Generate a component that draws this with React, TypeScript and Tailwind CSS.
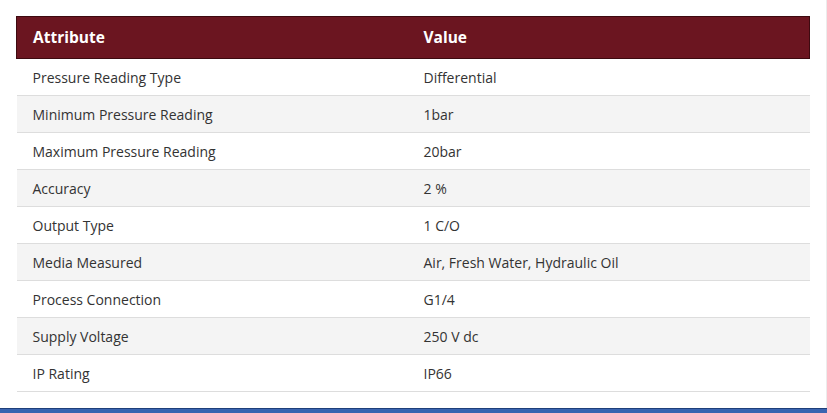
const rows: [string, string][] = [
  ["Pressure Reading Type", "Differential"],
  ["Minimum Pressure Reading", "1bar"],
  ["Maximum Pressure Reading", "20bar"],
  ["Accuracy", "2 %"],
  ["Output Type", "1 C/O"],
  ["Media Measured", "Air, Fresh Water, Hydraulic Oil"],
  ["Process Connection", "G1/4"],
  ["Supply Voltage", "250 V dc"],
  ["IP Rating", "IP66"],
];

export default function App() {
  return (
    <div
      className="flex h-[413px] w-[827px] flex-col overflow-hidden bg-white"
      style={{ fontFamily: '"Open Sans", "Noto Sans", sans-serif' }}
    >
      <div className="flex-1 border-r border-[#ececec] pl-4 pt-4">
        <table className="w-[794px] border-collapse text-left">
          <thead>
            <tr className="h-[42px] bg-[#6b1520]">
              <th className="w-[391px] border-y border-l border-[#3d0a10] pl-4 text-[15.5px] font-bold text-white">
                Attribute
              </th>
              <th className="border-y border-r border-[#3d0a10] pl-4 text-[15.5px] font-bold text-white">
                Value
              </th>
            </tr>
          </thead>
          <tbody>
            {rows.map(([attr, value], i) => (
              <tr
                key={attr}
                className={`h-[37px] border-b border-[#dddddd] ${i % 2 === 1 ? "bg-[#f4f4f4]" : "bg-white"}`}
              >
                <td className="pl-4 pt-px text-[14px] text-[#333333]">{attr}</td>
                <td className="pl-4 pt-px text-[14px] text-[#333333]">{value}</td>
              </tr>
            ))}
          </tbody>
        </table>
      </div>
      <div className="h-[5px] border-t border-[#1e3f7a] bg-[#3a64b0]" />
    </div>
  );
}
